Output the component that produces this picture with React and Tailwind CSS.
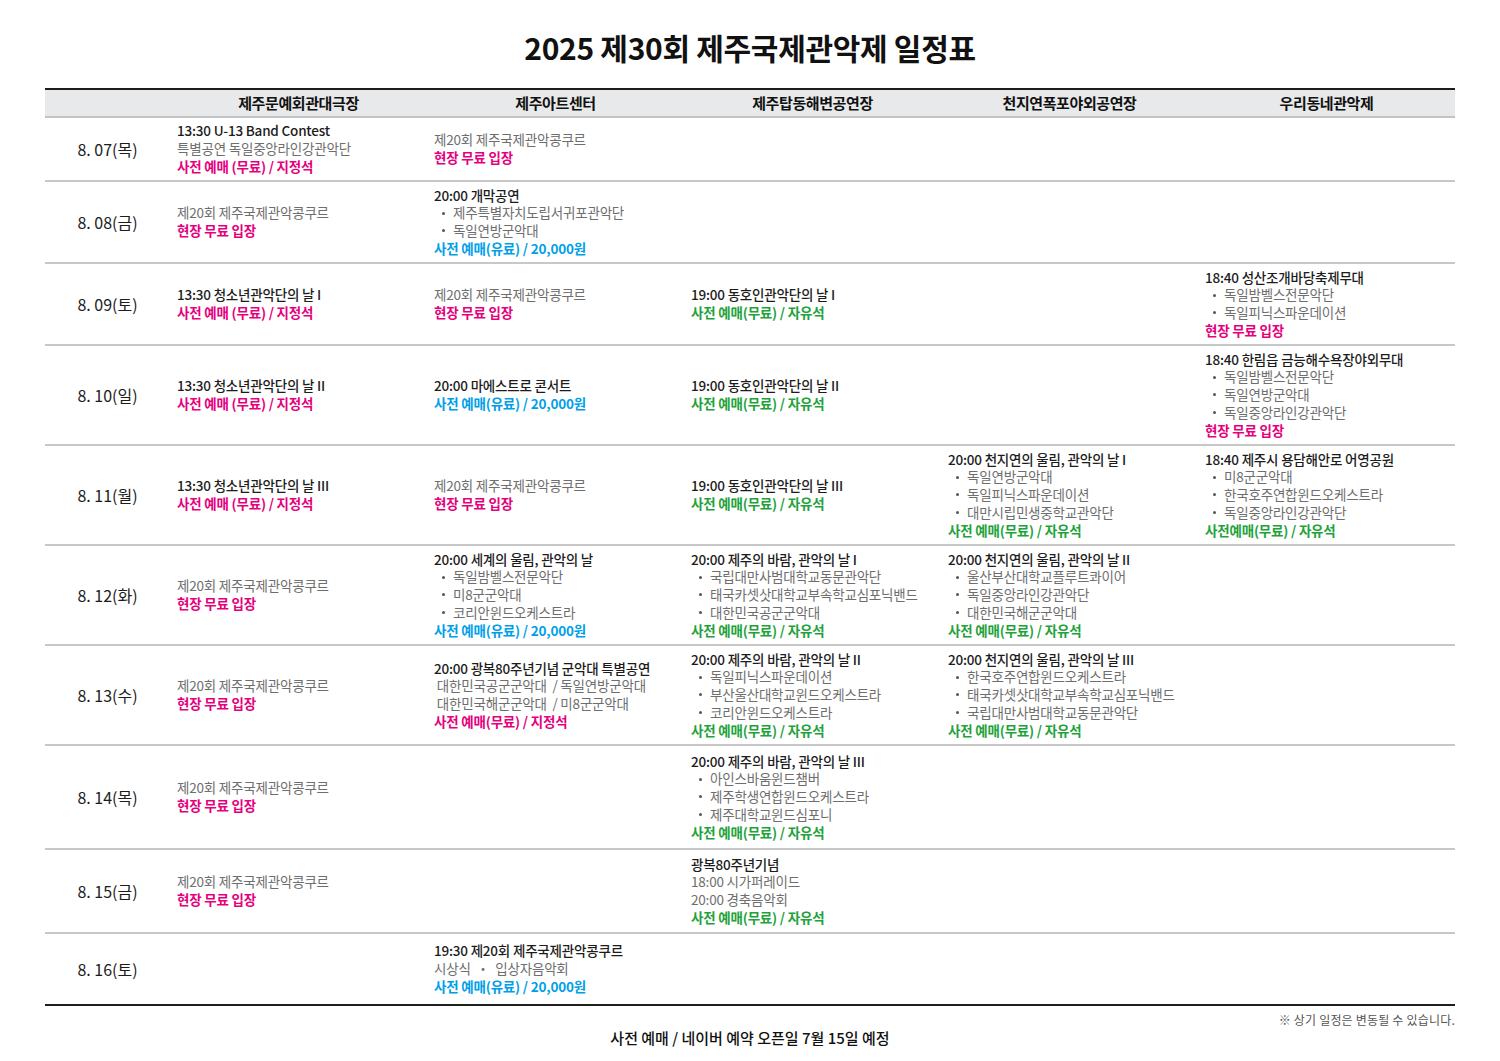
import React from "react";

// k: 제목, g: 설명, p: 현장/지정석(분홍), b: 유료(파랑), n: 자유석(초록), d: 점 목록
const headers = ["제주문예회관대극장", "제주아트센터", "제주탑동해변공연장", "천지연폭포야외공연장", "우리동네관악제"];

const contest = [
  ["g", "제20회 제주국제관악콩쿠르"],
  ["p", "현장 무료 입장"],
];

const seat = ["p", "사전 예매 (무료) / 지정석"];

const rows = [
  {
    date: "8. 07(목)",
    h: "h-[64px]",
    cells: [
      [["k", "13:30 U-13 Band Contest"], ["g", "특별공연 독일중앙라인강관악단"], seat],
      contest,
      [],
      [],
      [],
    ],
  },
  {
    date: "8. 08(금)",
    h: "h-[82px]",
    cells: [
      contest,
      [["k", "20:00 개막공연"], ["d", "제주특별자치도립서귀포관악단"], ["d", "독일연방군악대"], ["b", "사전 예매(유료) / 20,000원"]],
      [],
      [],
      [],
    ],
  },
  {
    date: "8. 09(토)",
    h: "h-[82px]",
    cells: [
      [["k", "13:30 청소년관악단의 날 I"], seat],
      contest,
      [["k", "19:00 동호인관악단의 날 I"], ["n", "사전 예매(무료) / 자유석"]],
      [],
      [["k", "18:40 성산조개바당축제무대"], ["d", "독일밤벨스전문악단"], ["d", "독일피닉스파운데이션"], ["p", "현장 무료 입장"]],
    ],
  },
  {
    date: "8. 10(일)",
    h: "h-[100px]",
    cells: [
      [["k", "13:30 청소년관악단의 날 II"], seat],
      [["k", "20:00 마에스트로 콘서트"], ["b", "사전 예매(유료) / 20,000원"]],
      [["k", "19:00 동호인관악단의 날 II"], ["n", "사전 예매(무료) / 자유석"]],
      [],
      [["k", "18:40 한림읍 금능해수욕장야외무대"], ["d", "독일밤벨스전문악단"], ["d", "독일연방군악대"], ["d", "독일중앙라인강관악단"], ["p", "현장 무료 입장"]],
    ],
  },
  {
    date: "8. 11(월)",
    h: "h-[100px]",
    cells: [
      [["k", "13:30 청소년관악단의 날 III"], seat],
      contest,
      [["k", "19:00 동호인관악단의 날 III"], ["n", "사전 예매(무료) / 자유석"]],
      [["k", "20:00 천지연의 울림, 관악의 날 I"], ["d", "독일연방군악대"], ["d", "독일피닉스파운데이션"], ["d", "대만시립민생중학교관악단"], ["n", "사전 예매(무료) / 자유석"]],
      [["k", "18:40 제주시 용담해안로 어영공원"], ["d", "미8군군악대"], ["d", "한국호주연합윈드오케스트라"], ["d", "독일중앙라인강관악단"], ["n", "사전예매(무료) / 자유석"]],
    ],
  },
  {
    date: "8. 12(화)",
    h: "h-[100px]",
    cells: [
      contest,
      [["k", "20:00 세계의 울림, 관악의 날"], ["d", "독일밤벨스전문악단"], ["d", "미8군군악대"], ["d", "코리안윈드오케스트라"], ["b", "사전 예매(유료) / 20,000원"]],
      [["k", "20:00 제주의 바람, 관악의 날 I"], ["d", "국립대만사범대학교동문관악단"], ["d", "태국카셋삿대학교부속학교심포닉밴드"], ["d", "대한민국공군군악대"], ["n", "사전 예매(무료) / 자유석"]],
      [["k", "20:00 천지연의 울림, 관악의 날 II"], ["d", "울산부산대학교플루트콰이어"], ["d", "독일중앙라인강관악단"], ["d", "대한민국해군군악대"], ["n", "사전 예매(무료) / 자유석"]],
      [],
    ],
  },
  {
    date: "8. 13(수)",
    h: "h-[100px]",
    cells: [
      contest,
      [["k", "20:00 광복80주년기념 군악대 특별공연"], ["g", "\u00a0대한민국공군군악대\u00a0 / 독일연방군악대"], ["g", "\u00a0대한민국해군군악대\u00a0 / 미8군군악대"], ["p", "사전 예매(무료) / 지정석"]],
      [["k", "20:00 제주의 바람, 관악의 날 II"], ["d", "독일피닉스파운데이션"], ["d", "부산울산대학교윈드오케스트라"], ["d", "코리안윈드오케스트라"], ["n", "사전 예매(무료) / 자유석"]],
      [["k", "20:00 천지연의 울림, 관악의 날 III"], ["d", "한국호주연합윈드오케스트라"], ["d", "태국카셋삿대학교부속학교심포닉밴드"], ["d", "국립대만사범대학교동문관악단"], ["n", "사전 예매(무료) / 자유석"]],
      [],
    ],
  },
  {
    date: "8. 14(목)",
    h: "h-[104px]",
    cells: [
      contest,
      [],
      [["k", "20:00 제주의 바람, 관악의 날 III"], ["d", "아인스바움윈드챔버"], ["d", "제주학생연합윈드오케스트라"], ["d", "제주대학교윈드심포니"], ["n", "사전 예매(무료) / 자유석"]],
      [],
      [],
    ],
  },
  {
    date: "8. 15(금)",
    h: "h-[84px]",
    cells: [
      contest,
      [],
      [["k", "광복80주년기념"], ["g", "18:00 시가퍼레이드"], ["g", "20:00 경축음악회"], ["n", "사전 예매(무료) / 자유석"]],
      [],
      [],
    ],
  },
  {
    date: "8. 16(토)",
    h: "h-[72px]",
    last: true,
    cells: [
      [],
      [["k", "19:30 제20회 제주국제관악콩쿠르"], ["g", "시상식 \u00a0・\u00a0 입상자음악회"], ["b", "사전 예매(유료) / 20,000원"]],
      [],
      [],
      [],
    ],
  },
];

const tone = {
  k: "text-[#1c1c1c] font-medium",
  g: "text-[#6e6e6e]",
  p: "text-[#e5007e] font-semibold",
  b: "text-[#00a0e9] font-semibold",
  n: "text-[#1ea33a] font-semibold",
};

const Line = ({ kind, text }) => {
  if (kind === "d") {
    return (
      <div className="flex items-center text-[#6e6e6e]">
        <span className="w-[19px] flex justify-center">
          <span className="block w-[3px] h-[3px] rounded-full bg-[#555]"></span>
        </span>
        <span>{text}</span>
      </div>
    );
  }
  return <div className={tone[kind]}>{text}</div>;
};

const Cell = ({ lines }) => (
  <div className="flex flex-col justify-center pl-[7px] text-[13.5px] leading-[17.7px] tracking-[-0.2px] whitespace-nowrap">
    {lines.map(([kind, text], i) => (
      <Line key={i} kind={kind} text={text} />
    ))}
  </div>
);

const App = () => {
  return (
    <div className="w-[1500px] min-h-[1061px] bg-white font-['Noto_Sans_CJK_KR','Noto_Sans',sans-serif] text-[#1c1c1c]">
      <div className="h-[88px] flex items-center justify-center pt-[6px]">
        <h1 className="text-[30px] font-bold tracking-[-0.3px] text-[#111]">2025 제30회 제주국제관악제 일정표</h1>
      </div>

      <div className="w-[1410px] mx-auto">
        <div className="grid grid-cols-[125px_repeat(5,257px)] h-[30px] bg-[#e8e9ea] border-t-2 border-[#1e1e1e] border-b-2 border-b-[#c4c4c4] items-center">
          <div></div>
          {headers.map((h) => (
            <div key={h} className="text-center text-[15px] font-bold tracking-[-0.4px] text-[#111]">
              {h}
            </div>
          ))}
        </div>

        {rows.map((row) => (
          <div
            key={row.date}
            className={`grid grid-cols-[125px_repeat(5,257px)] border-b-2 ${row.h} ${
              row.last ? "border-[#1e1e1e]" : "border-[#c8c8c8]"
            }`}
          >
            <div className="flex items-center justify-center text-[16px] text-[#1c1c1c]">
              {row.date}
            </div>
            {row.cells.map((c, i) => (
              <Cell key={i} lines={c} />
            ))}
          </div>
        ))}

        <div className="flex justify-end pt-[6px] text-[12px] leading-[16px] tracking-[0.2px] text-[#555]">
          ※ 상기 일정은 변동될 수 있습니다.
        </div>
        <div className="text-center text-[15px] leading-[20px] text-[#111] font-medium">
          사전 예매 / 네이버 예약 오픈일 7월 15일 예정
        </div>
      </div>
    </div>
  );
};

export default App;
